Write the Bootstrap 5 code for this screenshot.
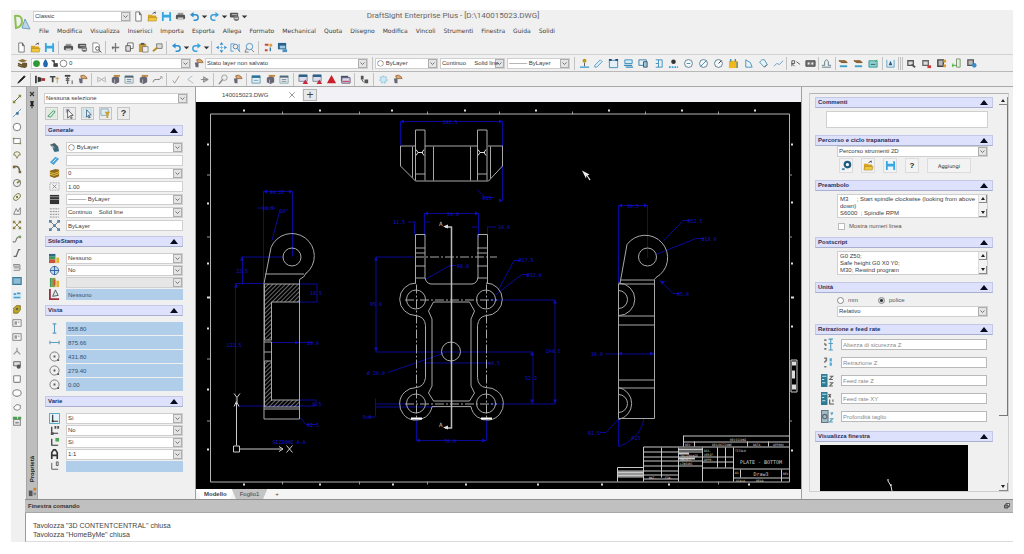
<!DOCTYPE html>
<html lang="it">
<head>
<meta charset="utf-8">
<meta name="viewport" content="width=device-width, initial-scale=1">
<title>DraftSight Enterprise Plus - [D:\140015023.DWG]</title>
<link href="https://cdn.jsdelivr.net/npm/bootstrap@5.3.0/dist/css/bootstrap.min.css" rel="stylesheet">
<style>
:root{--ui:#f0f0f0;--line:#c4c4c4;--ink:#3c3c3c;--head:#dde1fb;--sel:#b0cdea}
body{font-family:"Liberation Sans",Arial,sans-serif;font-size:6px;line-height:8px;color:var(--ink);background:#fff}
.app{height:100vh;min-height:554px;padding:10px 11px 12px}
.shell{background:var(--ui);min-height:0}
.ic{width:11px;height:11px;flex:none;display:block}
.tool{width:14px;height:14px;padding:0;border:0;background:none;display:flex;align-items:center;justify-content:center;flex:none}
.tool.dd{width:6px}
.rule{width:1px;height:13px;background:#c2c2c2;margin:0 2px;flex:none}
.spread .rule{margin:0}
.caption{height:12px}
.apptitle{font-family:Roboto,"Open Sans",sans-serif;font-size:8px;color:#666;left:0;right:140px;top:2px}
.menus{height:18px;gap:8px;padding-left:2px;font-family:"DejaVu Sans",Verdana,sans-serif}
.menus a{color:var(--ink);text-decoration:none}
.bar1{height:14px;padding-left:3px}
.bar2{height:17px;padding-left:4px;border-top:1px solid #d2d2d2}
.bar3{height:16px;padding-left:3px;border-top:1px solid #b9b9b9;border-bottom:1px solid #a9a9a9}
select.pick,input.pick,textarea.pick{font:inherit;color:var(--ink);border:1px solid #cfcfcf;border-radius:0;background:#fff;padding:0 1px;height:11px;line-height:9px;min-width:0;display:block}
select.pick{appearance:none;background:#fff url("data:image/svg+xml,%3Csvg xmlns='http://www.w3.org/2000/svg' viewBox='0 0 9 9'%3E%3Crect x='.5' y='.5' width='8' height='8' fill='%23e4e4e4' stroke='%23adadad'/%3E%3Cpath d='M2.5 3.5l2 2 2-2' fill='none' stroke='%23777'/%3E%3C/svg%3E") no-repeat right center/9px 9px}
select.pick:disabled{background-color:#e6e6e6;opacity:1}
select.naked{border:0;height:9px}
.pick.sel{background:var(--sel);border-color:var(--sel);color:#35506e}
.layerpick{background:#fff;border:1px solid #cfcfcf;height:11px}
.layerpick .ic{width:9px;height:9px}
.rail{width:15px;padding-top:5px}
.rail .tool{width:12px}
.rail .ic{width:10px;height:10px}
.strip{width:12px;background:#bdbdbd;border-left:1px solid #a5a5a5;border-right:1px solid #a5a5a5;padding:2px 0}
.sidelabel{writing-mode:vertical-rl;transform:rotate(180deg);font-weight:700;line-height:10px;color:#222}
.props{width:157px;padding:6px 7px 0 6px}
.sechead{background:var(--head);border:1px solid #c3c8e6;border-bottom-color:#a9afd0;height:11px;line-height:9px;padding:0 4px 0 2px;font-size:6px;font-weight:700;color:#28305c;display:flex;justify-content:space-between;align-items:center;width:100%;text-align:left;margin:0}
.sechead::after{content:"";border:4px solid transparent;border-top:0;border-bottom:5px solid #0a0a1e}
.psec{margin:5px 5px 0 1px}
.prow{display:flex;align-items:center;height:11px;padding-left:4px;margin:0}
.prow .ic{margin-right:6px}
.prow .pick{flex:1}
.rows{padding-top:6px;display:grid;gap:1px}
.rows.loose{gap:2px}
.rows.tall .prow,.rows.tall .pick{height:13px}
.keys{gap:5px;margin-top:3px;padding-left:1px}
.key{width:13px;height:13px;border:1px solid #c4c4c4;background:#ececec;padding:0;display:flex;align-items:center;justify-content:center;font-weight:700;font-size:9px;color:#333;line-height:9px}
.docarea{min-width:0;border-left:1px solid #a0a0a0;border-right:1px solid #a0a0a0;min-height:0}
.tabs{height:15px;background:#f2f2f6}
.doctab{width:106px;background:#fff;border:0;font-size:6px;color:#444;padding:0 6px 0 26px}
.plus{width:14px;height:12px;border:1px solid #b5b5b5;background:#e8e8e8;padding:0;font-size:12px;line-height:8px;color:#444}
.board{background:#000;min-height:0}
.sheets{height:10px;background:#f4f4f4;font-size:6px}
.sheets button{border:0;padding:0 8px;line-height:9px;color:#444;background:#fff;clip-path:polygon(0 0,100% 0,88% 100%,12% 100%)}
.sheets button+button{background:#c4c4c4;margin-left:-3px}
.cam{width:211px;padding:6px 4px 7px 7px}
.cambox{border:1px solid #cfcfcf;border-top-color:#b4b4b4;padding:3px 0 0 5px;min-height:0;overflow:hidden}
.camcol{min-width:0;min-height:0}
.csec{margin-bottom:7px}
.cbody{margin:0 5px 0 22px}
.big{width:14px;height:15px;border:1px solid #dcdcdc;background:#f3f3f3;padding:0;display:flex;align-items:center;justify-content:center;color:#222}
.wide{width:44px;font-family:"DejaVu Sans",sans-serif;font-size:5px}
.note{background:#fff;border:1px solid #cfcfcf;height:24px}
.note textarea{border:0;height:22px;line-height:7px;flex:1;resize:none;overflow:hidden;padding:1px 2px}
.mini{width:9px;background:#f2f2f2;border-left:1px solid #ddd}
.arr{height:8px;border-right:1px solid #888;border-bottom:1px solid #888;display:flex;align-items:center;justify-content:center}
.arr::after{content:"";border:2px solid transparent;border-top:0;border-bottom:3px solid #222}
.arr.down::after{border-bottom:0;border-top:3px solid #222}
.opt{height:8px;gap:4px;color:#555;display:flex;align-items:center}
.opt input{appearance:none;width:7px;height:7px;margin:0;background:#fff;border:1px solid #bbb}
.opt input[type=radio]{border-color:#888;border-radius:50%}
.opt input[type=radio]:checked{background:radial-gradient(#333 0 1px,#cfdbe4 2px)}
.feeds{padding:4px 0 2px;display:grid;gap:7px}
.feeds label{height:11px;display:flex;align-items:center;margin:0 6px 0 6px}
.feeds .ic{width:13px;height:13px;margin-right:7px}
.feeds .pick{flex:1;border-color:#b9b9b9}
.feeds .pick::placeholder{color:#8a8a8a;opacity:1}
.view{background:#000;margin:3px 25px 0 5px;min-height:0}
.scroller{width:15px;padding-left:6px}
.thumb{flex:0 1 79%;border-right:1px solid #777;border-bottom:1px solid #777}
.cmdhead{height:14px;background:#c0c0c0;border-top:1px solid #8f8f8f;border-bottom:1px solid #a8a8a8;margin-left:14px;padding:0 3px;font-weight:700;line-height:12px;color:#333;font-size:6px}
.cmdbody{background:#fff;border-left:1px solid #999;border-bottom:1px solid #dcdcdc;margin-left:14px;height:29px;padding:8px 7px 0;font-size:7px;line-height:9px;color:#444}
</style>
</head>
<body>
<svg width="0" height="0" class="position-absolute" aria-hidden="true">
<defs>
<symbol id="new" viewBox="0 0 12 12"><path d="M3 1h4l2 3v7H3z" fill="#fff" stroke="#777"/><path d="M7 1v3h2" fill="none" stroke="#555"/></symbol>
<symbol id="open" viewBox="0 0 12 12"><path d="M1 4h4l1 1h4v6H1z" fill="#d9a520"/><path d="M2 7h9l-1 4H1z" fill="#f0c83c" stroke="#9a7a20" stroke-width=".5"/><path d="M6 3l3-2v2" fill="none" stroke="#444"/></symbol>
<symbol id="save" viewBox="0 0 12 12"><path d="M1 1h9l1 1v9H1z" fill="#3aa6e0"/><path d="M3 1h6v3H3zM3 7h6v4H3z" fill="#e8f6ff"/></symbol>
<symbol id="print" viewBox="0 0 12 12"><path d="M3 2h6v3H3z" fill="#999"/><rect x="1" y="4" width="10" height="5" rx="1.5" fill="#555"/><path d="M3 7h6v3H3z" fill="#ccc"/></symbol>
<symbol id="print2" viewBox="0 0 12 12"><rect x="1" y="2" width="9" height="5" rx="1" fill="#555"/><path d="M3 4h6" stroke="#ccc"/><circle cx="8" cy="8" r="3" fill="#777"/><path d="M6 8h4" stroke="#eee"/></symbol>
<symbol id="preview" viewBox="0 0 12 12"><path d="M2 1h5l2 2v8H2z" fill="#fff" stroke="#888"/><circle cx="7" cy="7" r="2" fill="none" stroke="#555"/><path d="M8.500 8.500l3 3" stroke="#555"/></symbol>
<symbol id="undo" viewBox="0 0 12 12"><path d="M3 4h4a3 3 0 0 1 0 6H5" fill="none" stroke="#2c8fd0" stroke-width="1.600"/><path d="M1 4l4-3v6z" fill="#2c8fd0"/></symbol>
<symbol id="redo" viewBox="0 0 12 12"><path d="M9 4H5a3 3 0 0 0 0 6h2" fill="none" stroke="#3aa2dc" stroke-width="1.600"/><path d="M11 4L7 1v6z" fill="#3aa2dc"/></symbol>
<symbol id="dd" viewBox="0 0 12 12"><path d="M3 5h6l-3 3z" fill="#333"/></symbol>
<symbol id="cut" viewBox="0 0 12 12"><path d="M6 1v10M2 6h8" stroke="#777" stroke-width="1.400"/><path d="M3 5v3" stroke="#555"/></symbol>
<symbol id="copy" viewBox="0 0 12 12"><path d="M4 1h6v6H4z" fill="#fff" stroke="#666"/><path d="M2 4h5v6H2z" fill="#ddd" stroke="#555"/></symbol>
<symbol id="paste" viewBox="0 0 12 12"><path d="M1 2h8v9H1z" fill="#c99a2e"/><path d="M3 1h4v2H3z" fill="#555"/><path d="M5 5h6v6H5z" fill="#eee" stroke="#666" stroke-width=".7"/></symbol>
<symbol id="brush" viewBox="0 0 12 12"><path d="M5 2h6v5H5z" fill="#ddd" stroke="#777"/><path d="M1 10l5-4" stroke="#b88b20" stroke-width="2"/></symbol>
<symbol id="pan" viewBox="0 0 12 12"><path d="M6 0l2 3H4zM6 12l2-3H4zM0 6l3-2v4zM12 6L9 4v4z" fill="#2f8fd0"/><path d="M6 4v4M4 6h4" stroke="#7bb8e4"/></symbol>
<symbol id="zwin" viewBox="0 0 12 12"><path d="M1 2h4M1 2v8h3M10 2v8" fill="none" stroke="#5b9fd2"/><circle cx="6" cy="5" r="2.500" fill="none" stroke="#4a86b4"/><path d="M8 7l3 4" stroke="#4a86b4"/></symbol>
<symbol id="zoom" viewBox="0 0 12 12"><circle cx="6" cy="5" r="3.500" fill="none" stroke="#4f94c6"/><path d="M3 7l-2 4h4M8 8l3 3" fill="none" stroke="#777"/></symbol>
<symbol id="sheet" viewBox="0 0 12 12"><path d="M2 2h8v8H2z" fill="#eee"/><path d="M2 3h4M2 9h3" stroke="#c94a30" stroke-width="2"/><path d="M7 2h3v3H7z" fill="#e0a030"/><path d="M8 6v4" stroke="#3c78a0" stroke-width="1.500"/></symbol>
<symbol id="panel" viewBox="0 0 12 12"><path d="M1 1h9v7H1z" fill="#28638e"/><path d="M3 4h6v3H3z" fill="#9cc8e4"/><path d="M6 8h5v3H6z" fill="#4a90c0"/></symbol>
<symbol id="layer" viewBox="0 0 12 12"><path d="M1 3l5-2 5 2-5 2z" fill="#8d7434"/><path d="M1 6l5 2 5-2M1 8l5 2" fill="none" stroke="#5e4c22" stroke-width="1.500"/><circle cx="8" cy="8" r="3" fill="#6a5830"/></symbol>
<symbol id="green" viewBox="0 0 12 12"><circle cx="6" cy="6" r="4.500" fill="#2f9a35"/></symbol>
<symbol id="drop" viewBox="0 0 12 12"><path d="M6 0q4 5 3 8a3 3 0 0 1-6 0q-1-3 3-8" fill="#2468b0"/></symbol>
<symbol id="lock" viewBox="0 0 12 12"><path d="M2 2h4v4M5 6h5v4H5z" fill="#444" stroke="#444"/></symbol>
<symbol id="ring" viewBox="0 0 12 12"><circle cx="6" cy="6" r="4.500" fill="#fff" stroke="#666"/></symbol>
<symbol id="pencil" viewBox="0 0 12 12"><path d="M2 10l2-3 5-5 1 1-5 5z" fill="#222" stroke="#222"/></symbol>
<symbol id="bolt" viewBox="0 0 12 12"><path d="M1 2v8" stroke="#444" stroke-width="2"/><path d="M3 3l4 1v4l-4 1z" fill="#333"/><path d="M7 6h4" stroke="#a33" stroke-width="3"/></symbol>
<symbol id="tee" viewBox="0 0 12 12"><path d="M1 3h6M4 3v6" stroke="#444" stroke-width="1.800"/><path d="M9 3v7M7 5h4" stroke="#c69a50"/></symbol>
<symbol id="screw" viewBox="0 0 12 12"><path d="M2 1h6v2H2z" fill="#444"/><path d="M5 3v8M3 5h4M3 7h4" stroke="#666" stroke-width="1.400"/><path d="M10 7v4" stroke="#555"/></symbol>
<symbol id="hand" viewBox="0 0 12 12"><path d="M4 2q3-2 6 1l1 2H5z" fill="#d9a878" stroke="#a0703c"/><path d="M2 5h4v5H3z" fill="#667"/></symbol>
<symbol id="dim" viewBox="0 0 12 12"><path d="M2 3v6M10 3v6M3 4l6 4M3 8l6-4" stroke="#aaa"/></symbol>
<symbol id="box" viewBox="0 0 12 12"><path d="M2 4l5-2 3 2v5l-4 2-4-2z" fill="#667"/><path d="M4 2h7" stroke="#c08a3c" stroke-width="2"/><path d="M5 6v4" stroke="#bbb"/></symbol>
<symbol id="table" viewBox="0 0 12 12"><path d="M1 2h9v8H1z" fill="#e9eef2" stroke="#8aa"/><path d="M1 3h9" stroke="#567" stroke-width="2"/><path d="M3 6h5M3 8h5" stroke="#789"/></symbol>
<symbol id="curve" viewBox="0 0 12 12"><path d="M1 9q1-4 4-3t5-2" fill="none" stroke="#777"/><path d="M9 3h2v2" fill="none" stroke="#999"/></symbol>
<symbol id="tick" viewBox="0 0 12 12"><path d="M2 7l2 3 5-8" fill="none" stroke="#999"/></symbol>
<symbol id="angle" viewBox="0 0 12 12"><path d="M8 2L3 6l6 4" fill="none" stroke="#a5b8c2"/></symbol>
<symbol id="flag" viewBox="0 0 12 12"><path d="M2 6h8M5 3v6l5-3z" fill="#bbb" stroke="#888"/></symbol>
<symbol id="mag" viewBox="0 0 12 12"><circle cx="7" cy="4" r="3" fill="#eee" stroke="#999"/><path d="M5 6l-4 5" stroke="#888" stroke-width="1.500"/></symbol>
<symbol id="win" viewBox="0 0 12 12"><path d="M1 2h9v8H1z" fill="#dfeef6" stroke="#6d9cb4"/><path d="M1 3h9" stroke="#2a6f94" stroke-width="2.500"/><path d="M3 7h5" stroke="#7ab"/></symbol>
<symbol id="winred" viewBox="0 0 12 12"><path d="M1 1h9v7H1z" fill="#dde" stroke="#789"/><path d="M1 2h9" stroke="#2c6288" stroke-width="2.500"/><path d="M8 6l3 5H5z" fill="#c8283c"/></symbol>
<symbol id="tri" viewBox="0 0 12 12"><path d="M6 1l5 9H1z" fill="#c8202c"/></symbol>
<symbol id="wins" viewBox="0 0 12 12"><path d="M1 2h8v6H1z" fill="#456"/><path d="M2 4h9v6H2z" fill="#d8d4ea" stroke="#63587c"/><path d="M3 8h7" stroke="#c8283c"/></symbol>
<symbol id="ab" viewBox="0 0 12 12"><path d="M2 2h3v4H2zM6 6h4v4H6z" fill="#555"/><path d="M3 6l2 3" stroke="#444"/></symbol>
<symbol id="snow" viewBox="0 0 12 12"><circle cx="6" cy="6" r="3.500" fill="#cfe8f4" stroke="#9ccbe2" stroke-width="2" stroke-dasharray="2 1"/></symbol>
<symbol id="snap" viewBox="0 0 12 12"><path d="M1 10h10" stroke="#3f9fd0" stroke-width="1.500"/><path d="M6 9V5" stroke="#555"/><circle cx="6" cy="3" r="2.200" fill="#b59a20"/></symbol>
<symbol id="clip" viewBox="0 0 12 12"><path d="M2 8l6-6 2 2-6 6H2z" fill="#e5f3fa" stroke="#4c94c0"/></symbol>
<symbol id="frame" viewBox="0 0 12 12"><path d="M1.500 2.500h9v8h-9z" fill="#e3f2f9" stroke="#3c8cbc"/><path d="M1 2h3M8 2h3" stroke="#246" stroke-width="2"/></symbol>
<symbol id="stack" viewBox="0 0 12 12"><path d="M2 2h8v4H2z" fill="#d4ecf6" stroke="#3c8cbc"/><path d="M1 8h9M3 10h8" stroke="#3c8cbc" stroke-width="1.500"/></symbol>
<symbol id="frame2" viewBox="0 0 12 12"><path d="M1 2h8v6H1z" fill="#e3f2f9" stroke="#3c7ca4"/><path d="M6 4h4v6H6z" fill="#9cc4d8" stroke="#456"/></symbol>
<symbol id="ladder" viewBox="0 0 12 12"><path d="M3 2h7v8H3M6 2v8M3 6h3" fill="none" stroke="#3c8cbc"/></symbol>
<symbol id="target" viewBox="0 0 12 12"><path d="M1 10h10" stroke="#3f9fd0" stroke-width="2" stroke-dasharray="2 1"/><circle cx="6" cy="4" r="2.500" fill="#333"/></symbol>
<symbol id="cdash" viewBox="0 0 12 12"><circle cx="6" cy="6" r="4.300" fill="#f6fafc" stroke="#5b7c8c"/><path d="M4 6h4" stroke="#3b88b4"/></symbol>
<symbol id="cslash" viewBox="0 0 12 12"><circle cx="6" cy="6" r="4.300" fill="#f6fafc" stroke="#5b7c8c"/><path d="M3 9l6-6" stroke="#3b88b4"/></symbol>
<symbol id="crad" viewBox="0 0 12 12"><circle cx="6" cy="6" r="4.300" fill="#f6fafc" stroke="#5b7c8c"/><path d="M6 6l3-3" stroke="#333"/></symbol>
<symbol id="gold" viewBox="0 0 12 12"><path d="M1 3h9v8H1z" fill="#f0b81c"/><path d="M3 1v3M8 1v3M10 4v7" stroke="#4a8cb0" stroke-width="1.500"/></symbol>
<symbol id="shape" viewBox="0 0 12 12"><path d="M3 2v8h7L8 5z" fill="#e8f4fa" stroke="#4c8fb4"/></symbol>
<symbol id="arcs" viewBox="0 0 12 12"><path d="M2 5q1-4 5-3l3 5-3 3z" fill="#e8f4fa" stroke="#4c8fb4"/><path d="M7 10l3-3" stroke="#555"/></symbol>
<symbol id="jog" viewBox="0 0 12 12"><path d="M1 9l3-3 3 1 4-4" fill="none" stroke="#5b9fc2"/></symbol>
<symbol id="rtext" viewBox="0 0 12 12"><path d="M2 9V3h3v3H2l3 3" fill="none" stroke="#555"/><path d="M7 4l4 3" stroke="#555"/></symbol>
<symbol id="grid2" viewBox="0 0 12 12"><path d="M1 3h10v6H1z" fill="#777" stroke="#444"/><path d="M3 5h2v2H3zM7 5h2v2H7z" fill="#eee"/></symbol>
<symbol id="scale" viewBox="0 0 12 12"><path d="M1 8h3V4q2-4 4 0v4h3M1 10h10" fill="none" stroke="#5c7888"/></symbol>
<symbol id="handdim" viewBox="0 0 12 12"><path d="M1 3h7l2 2H4z" fill="#9c6c38" stroke="#7a5024"/><path d="M2 9h8" stroke="#38a0c8" stroke-width="2"/></symbol>
<symbol id="teal" viewBox="0 0 12 12"><path d="M1 3h9v7H1z" fill="#8fd0cc" stroke="#3b9aa0"/><path d="M3 7h5" stroke="#366"/><path d="M8 4l2-2" stroke="#2a2"/></symbol>
<symbol id="axis" viewBox="0 0 12 12"><path d="M2 2v8h8V2" fill="#e3f0f6" stroke="#5aa0c0"/><path d="M6 3l2 5H4z" fill="#357"/></symbol>
<symbol id="blk" viewBox="0 0 12 12"><path d="M2 3h6v5H2z" fill="#ddd" stroke="#555" stroke-width="1.400"/><path d="M6 7l4 3" stroke="#555" stroke-width="2"/></symbol>
<symbol id="blkred" viewBox="0 0 12 12"><path d="M2 3h6v5H2z" fill="#ddd" stroke="#666" stroke-width="1.400"/><path d="M7 8h4v3H7z" fill="#d23838"/></symbol>
<symbol id="blkor" viewBox="0 0 12 12"><path d="M2 2h6v7H2z" fill="#bbb" stroke="#444" stroke-width="1.500"/><path d="M8 2h3v3H8zM8 7h3v3H8z" fill="#e39a28"/></symbol>
<symbol id="blkgr" viewBox="0 0 12 12"><path d="M6 1h4v9H6z" fill="#e4eee0" stroke="#7a9468"/><path d="M1 8h5M2 6v4" stroke="#3a3"/></symbol>
<symbol id="blkbl" viewBox="0 0 12 12"><path d="M2 2h6v6H2z" fill="#bbb" stroke="#555" stroke-width="1.400"/><circle cx="9" cy="8" r="2.500" fill="#3b8ec8"/></symbol>
<symbol id="line" viewBox="0 0 12 12"><path d="M3 9l6-6" stroke="#6b6b50" stroke-width="1.200"/><path d="M1 8h3v3H1zM8 1h3v3H8z" fill="#8b8a40"/></symbol>
<symbol id="xline" viewBox="0 0 12 12"><path d="M1 11L11 1" stroke="#4b93c4"/><path d="M5 5h3v3H5z" fill="#3b6f94"/></symbol>
<symbol id="rect" viewBox="0 0 12 12"><path d="M2 3h8v6H2z" fill="#fff" stroke="#777"/><path d="M1 2h2v2H1zM9 8h2v2H9z" fill="#8b8a40"/></symbol>
<symbol id="poly" viewBox="0 0 12 12"><path d="M2 6q0-4 4-4t4 4H8l-2 4-2-4z" fill="#eed" stroke="#77744c"/></symbol>
<symbol id="arc" viewBox="0 0 12 12"><path d="M2 3h4q3 1 3 6" fill="none" stroke="#6b6544" stroke-width="1.800"/><path d="M1 2h3v3H1zM8 8h3v3H8z" fill="#77683c"/></symbol>
<symbol id="circ" viewBox="0 0 12 12"><circle cx="6" cy="6" r="4.300" fill="#eee" stroke="#666"/><path d="M6 6l4-3" stroke="#8b8a40" stroke-width="2"/></symbol>
<symbol id="ell" viewBox="0 0 12 12"><ellipse cx="6" cy="6" rx="5" ry="3" transform="rotate(-45 6 6)" fill="#eec" stroke="#77744c"/><circle cx="6" cy="6" r="1.200" fill="#554"/></symbol>
<symbol id="spl" viewBox="0 0 12 12"><path d="M2 10L5 3l2 4 3-5v8z" fill="none" stroke="#777"/></symbol>
<symbol id="pts" viewBox="0 0 12 12"><path d="M2 2l8 8M10 2l-8 8" stroke="#8f8848"/><path d="M1 1h3v3H1zM8 1h3v3H8zM1 8h3v3H1zM8 8h3v3H8zM5 5h2v2H5z" fill="#8f8848"/></symbol>
<symbol id="wave" viewBox="0 0 12 12"><path d="M1 9q3 2 4-2t5-4" fill="none" stroke="#777" stroke-width="1.300"/><path d="M8 2h3v3H8z" fill="#7aa060"/></symbol>
<symbol id="slash" viewBox="0 0 12 12"><path d="M2 10h3l3-8h2" fill="none" stroke="#666" stroke-width="1.500"/></symbol>
<symbol id="cloud" viewBox="0 0 12 12"><path d="M2 3h7l1 2H2zM2 7h8l-1 3H2" fill="#eee" stroke="#777"/></symbol>
<symbol id="hatch" viewBox="0 0 12 12"><path d="M1 2h10v8H1z" fill="#8dbcd4" stroke="#3b7c9c" stroke-width="1.400"/></symbol>
<symbol id="hatch2" viewBox="0 0 12 12"><path d="M1 3h10v8H1z" fill="#cfe8f4"/><path d="M2 5h3M6 4h4M2 9h8" stroke="#48a0cc" stroke-width="2"/></symbol>
<symbol id="gem" viewBox="0 0 12 12"><path d="M2 5l3-3h5v5l-3 4H2z" fill="#c0a828" stroke="#7d7024"/><circle cx="6" cy="6" r="1.500" fill="#665"/></symbol>
<symbol id="note" viewBox="0 0 12 12"><path d="M1 2h10v8H1z" fill="#f4f4f4" stroke="#777"/><path d="M3 4h3v4H3z" fill="#999"/><path d="M7 5h2" stroke="#777"/></symbol>
<symbol id="tree" viewBox="0 0 12 12"><path d="M6 2v4L2 10M6 6l4 4" fill="none" stroke="#999" stroke-width="1.500"/></symbol>
<symbol id="bub" viewBox="0 0 12 12"><path d="M2 2h8v5H2z" fill="#ddd" stroke="#555"/><circle cx="8" cy="8" r="2.500" fill="#555"/></symbol>
<symbol id="sq" viewBox="0 0 12 12"><rect x="2" y="2" width="8" height="8" rx="1" fill="#fafafa" stroke="#888" stroke-width="1.300"/></symbol>
<symbol id="oval" viewBox="0 0 12 12"><ellipse cx="6" cy="6" rx="5" ry="4" fill="#fafafa" stroke="#888" stroke-width="1.300"/></symbol>
<symbol id="rot" viewBox="0 0 12 12"><path d="M2 6l4-3 4 1v4l-3 2-4-1z" fill="#fafafa" stroke="#888" stroke-width="1.200"/></symbol>
<symbol id="grp" viewBox="0 0 12 12"><path d="M2 4h8v7H2z" fill="#eee" stroke="#888" stroke-width="1.300"/><path d="M1 1h5v3H1zM7 1h4v3H7z" fill="#4aa050"/><path d="M4 7h4v2H4z" fill="#888"/></symbol>
<symbol id="close" viewBox="0 0 12 12"><path d="M2 2l8 8M10 2l-8 8" stroke="#333" stroke-width="2.200"/></symbol>
<symbol id="x" viewBox="0 0 12 12"><path d="M2 2l8 8M10 2l-8 8" stroke="#666"/></symbol>
<symbol id="pin" viewBox="0 0 12 12"><path d="M3 1h6M3 7h6M6 1v10" stroke="#222" stroke-width="1.500"/><path d="M4 1h4v6H4z" fill="#222"/></symbol>
<symbol id="doti" viewBox="0 0 12 12"><path d="M2 5h4v6H2z" fill="#555"/><path d="M7 2h3v3H7z" fill="#d0802c"/><path d="M7 7h3v3H7z" fill="#888"/></symbol>
<symbol id="selnew" viewBox="0 0 12 12"><path d="M1 1h10v10H1z" fill="#dcebd8"/><path d="M2 9l6-6 2 1-5 6z" fill="#d7ead2" stroke="#4c9480"/></symbol>
<symbol id="cursor" viewBox="0 0 12 12"><path d="M2 1h4v4H2z" fill="#aab"/><path d="M4 2l6 6-3 .3 2 2.700-1.500.5L6 9l-2 2z" fill="#fff" stroke="#333" stroke-width=".8"/></symbol>
<symbol id="cursorb" viewBox="0 0 12 12"><path d="M1 1h9v9H1z" fill="#d6ecf8" stroke="#9cc" stroke-dasharray="1 1"/><path d="M5 2l5 5.500-3 .3 2 2.500-1.500.6L6.500 8.500 5 10z" fill="#eef6fb" stroke="#246" stroke-width=".8"/></symbol>
<symbol id="filter" viewBox="0 0 12 12"><path d="M1 1h8v7H1z" fill="#e0ebf0" stroke="#8ab"/><path d="M5 4h6l-2 3v4H7V7z" fill="#caa228"/></symbol>
<symbol id="color" viewBox="0 0 12 12"><path d="M1 3l5-2 4 4-4 3z" fill="#48626c"/><path d="M4 7l6-2 1 5-5 1z" fill="#3c6a80"/><path d="M3 4l3 2" stroke="#ccc"/></symbol>
<symbol id="link" viewBox="0 0 12 12"><path d="M1 8l6-6 4 2-6 7z" fill="#4aa3d8"/><path d="M4 8l4-4" stroke="#dff"/></symbol>
<symbol id="layers" viewBox="0 0 12 12"><path d="M1 3l6-2 4 1v7l-5 2-5-2z" fill="#8d6a1c"/><path d="M1 5l5 1 5-2M1 7l5 1 5-2" fill="none" stroke="#f0cb4c"/></symbol>
<symbol id="ltscale" viewBox="0 0 12 12"><path d="M1 2h10v8H1z" fill="none" stroke="#aaa" stroke-dasharray="2 1"/><path d="M4 4l4 4M8 4L4 8" stroke="#888"/></symbol>
<symbol id="weight" viewBox="0 0 12 12"><path d="M1 1h10v10H1z" fill="#333"/><path d="M1 3h10M1 6h10" stroke="#999"/></symbol>
<symbol id="ltype" viewBox="0 0 12 12"><path d="M1 2h10M1 5h10M1 8h10M1 11h10" stroke="#888" stroke-dasharray="2 1"/></symbol>
<symbol id="net" viewBox="0 0 12 12"><path d="M2 2l8 8M10 2l-8 8" stroke="#678"/><path d="M0 0h3v3H0zM9 0h3v3H9zM0 9h3v3H0zM9 9h3v3H9zM4.500 4.500h3v3h-3z" fill="#5b84a4"/></symbol>
<symbol id="pstyle" viewBox="0 0 12 12"><path d="M0 1h7v3H0z" fill="#2d6a88"/><path d="M0 4h7v3H0z" fill="#3e9a54"/><path d="M0 7h7v4H0z" fill="#c8543a"/><path d="M8 5h3v6H8z" fill="#e2b232"/></symbol>
<symbol id="globe" viewBox="0 0 12 12"><circle cx="6" cy="6" r="4.500" fill="#b7e0e4" stroke="#476ea4"/><path d="M1 6h10M6 1v10" stroke="#3658a0"/></symbol>
<symbol id="ptable" viewBox="0 0 12 12"><path d="M1 1h2v10H1z" fill="#3e9a54"/><path d="M3 1h4v10H3z" fill="#8d9a50"/><path d="M5 3h2v6H5z" fill="#c8543a"/><path d="M8 4h3v7H8z" fill="#e2b232"/></symbol>
<symbol id="pspace" viewBox="0 0 12 12"><path d="M1 0v11h10" stroke="#a02c3c" stroke-width="2" fill="none"/><path d="M4 8l3-7 3 6z" fill="#dfe8d8" stroke="#456"/></symbol>
<symbol id="vert" viewBox="0 0 12 12"><path d="M6 1v10M4 1h4M4 11h4" stroke="#5e9cc0" stroke-width="1.200"/></symbol>
<symbol id="horz" viewBox="0 0 12 12"><path d="M1 6h10M1 4v4M11 4v4" stroke="#5e9cc0" stroke-width="1.200"/></symbol>
<symbol id="cen" viewBox="0 0 12 12"><circle cx="6" cy="6" r="5" fill="none" stroke="#777"/><path d="M5 5h2v2H5zM9 9h2v2H9z" fill="#555"/></symbol>
<symbol id="ucs1" viewBox="0 0 12 12"><path d="M.5.500h11v11H.5z" fill="#e3f4fa" stroke="#4ba0c4"/><path d="M4 2v7h6" fill="none" stroke="#333" stroke-width="1.300"/><path d="M3 8h2v2H3z" fill="#333"/></symbol>
<symbol id="ucs2" viewBox="0 0 12 12"><path d="M3 2v7h7" fill="none" stroke="#333" stroke-width="1.300"/><path d="M6 1h2v3H6zM9 1h2v3H9zM2 8h3v3H2z" fill="#555"/></symbol>
<symbol id="ucs3" viewBox="0 0 12 12"><path d="M3 2v7h7" fill="none" stroke="#333" stroke-width="1.300"/><path d="M7 1h4v4H7z" fill="#4aa858"/></symbol>
<symbol id="annot" viewBox="0 0 12 12"><path d="M3 11V4l2-3h2l2 3v7M3 7h6" fill="none" stroke="#333" stroke-width="1.800"/></symbol>
<symbol id="ucs4" viewBox="0 0 12 12"><path d="M3 2v7h7" fill="none" stroke="#555"/><path d="M8 1h2v4H8z" fill="none" stroke="#555"/></symbol>
<symbol id="gear" viewBox="0 0 12 12"><circle cx="7" cy="5" r="3" fill="#fff" stroke="#1e5c84" stroke-width="2.400"/><path d="M1 9h3v2H1z" fill="#48a"/></symbol>
<symbol id="sa" viewBox="0 0 12 12"><path d="M3 2h2M3 5l2 2M3 10h2" stroke="#777" stroke-width="1.500"/><path d="M9 1v10M7 1h4M7 11h4M7 5h4" stroke="#4f9cc4"/></symbol>
<symbol id="rz" viewBox="0 0 12 12"><path d="M3 2h2v2L3 6M3 10h2" fill="none" stroke="#777" stroke-width="1.400"/><path d="M9 2v8" stroke="#4fa8d4" stroke-width="2" stroke-dasharray="3 1"/></symbol>
<symbol id="fz" viewBox="0 0 12 12"><path d="M0 0h6v12H0z" fill="#2b7c94"/><path d="M1 2h4M1 5h2M1 8h3" stroke="#bfe4ea"/><path d="M8 2h3L8 5h3M8 8h3l-3 3h3" fill="none" stroke="#666"/></symbol>
<symbol id="fxy" viewBox="0 0 12 12"><path d="M0 0h6v12H0z" fill="#2b7c94"/><path d="M1 2h4M1 5h2M1 8h3" stroke="#bfe4ea"/><path d="M7 2l2 3M9 2L7 5M8 7v4h4M11 7v2" fill="none" stroke="#555"/></symbol>
<symbol id="pt" viewBox="0 0 12 12"><path d="M.5.500h6v11h-6z" fill="#a8bcc6" stroke="#607885"/><circle cx="3.500" cy="6" r="2" fill="none" stroke="#567"/><path d="M9 2l1 2 1-2M8 8h3l-3 3h3" fill="none" stroke="#4f9cc4"/></symbol>
<symbol id="restore" viewBox="0 0 12 12"><path d="M4 1h7v6H4z" fill="#ddd" stroke="#333" stroke-width="1.500"/><path d="M1 4h7v6H1z" fill="#888" stroke="#333" stroke-width="1.500"/></symbol>
<pattern id="hp" width="3" height="3" patternUnits="userSpaceOnUse" patternTransform="rotate(45)"><path d="M0 0v3" stroke="#999" stroke-width="1.400"/></pattern>
</defs>
</svg>

<div class="app d-flex flex-column">
<div class="shell d-flex flex-column flex-fill">
  <header>
    <div class="d-flex">
      <svg width="18" height="18" viewBox="0 0 16 18" class="flex-shrink-0 mt-1" style="margin:0 2px" aria-label="DraftSight"><path d="M1 2q7-1 7 5t-6 7z" fill="none" stroke="#8cc152" stroke-width="2"/><path d="M8 14l3-9 5 10z" fill="#bcd6e6" stroke="#6fa0bd"/></svg>
      <div class="flex-fill">
        <div class="caption d-flex align-items-center position-relative">
          <select class="pick" style="width:98px" aria-label="Area di lavoro"><option>Classic</option></select>
          <div class="d-flex" data-tools="new open save print undo dd redo dd print2 dd"></div>
          <div class="apptitle position-absolute text-center pe-none">DraftSight Enterprise Plus - [D:\140015023.DWG]</div>
        </div>
        <nav class="menus d-flex align-items-center" aria-label="Menu">
          <a href="#" class="ms-1">File</a><a href="#">Modifica</a><a href="#">Visualizza</a><a href="#">Inserisci</a><a href="#">Importa</a><a href="#">Esporta</a><a href="#">Allega</a><a href="#">Formato</a><a href="#">Mechanical</a><a href="#">Quota</a><a href="#">Disegno</a><a href="#">Modifica</a><a href="#">Vincoli</a><a href="#">Strumenti</a><a href="#">Finestra</a><a href="#">Guida</a><a href="#">Solidi</a>
        </nav>
      </div>
    </div>
    <div class="bar1 d-flex align-items-center" data-tools="new open save | print print2 preview | cut copy paste brush | undo dd redo dd | pan zwin zoom | sheet panel"></div>
    <div class="bar2 d-flex align-items-center">
      <div class="d-flex" data-tools="layer"></div>
      <div class="layerpick d-flex align-items-center" style="width:160px;margin-left:2px"><svg class="ic"><use href="#green"/></svg><svg class="ic"><use href="#drop"/></svg><svg class="ic"><use href="#lock"/></svg><svg class="ic"><use href="#ring"/></svg><select class="pick naked flex-fill" aria-label="Layer"><option>0</option></select></div>
      <div class="d-flex" data-tools="hand"></div>
      <select class="pick" style="width:163px" aria-label="Stato layer"><option>Stato layer non salvato</option></select>
      <span class="rule ms-1"></span>
      <select class="pick" style="width:63px" aria-label="Colore"><option>◯ ByLayer</option></select>
      <select class="pick" style="width:65px;margin:0 2px" aria-label="Stile linea"><option>Continuo&nbsp;&nbsp;&nbsp;&nbsp; Solid line</option></select>
      <select class="pick" style="width:63px" aria-label="Spessore linea"><option>——— ByLayer</option></select>
      <span class="rule ms-1"></span>
      <div class="spread d-flex flex-fill justify-content-between align-items-center" style="margin-right:35px" data-tools="snap clip frame stack frame2 ladder target cdash cslash crad gold shape arcs jog | rtext grid2 | scale | handdim handdim teal | axis | | | blk blkred blkor blkgr blkbl"></div>
    </div>
    <div class="bar3 d-flex align-items-center" data-tools="pencil | bolt tee screw hand | dim box table box curve | tick angle flag | mag hand | win box table | winred winred tri wins | ab | snow hand"></div>
  </header>

  <main class="d-flex flex-fill" style="min-height:0">
    <div class="rail d-flex flex-column flex-shrink-0" data-tools="line xline ring rect poly arc circ ell spl pts wave slash cloud hatch hatch2 gem note note tree bub sq oval rot grp"></div>
    <div class="strip d-flex flex-column align-items-center flex-shrink-0">
      <button class="tool" style="width:9px;height:9px" aria-label="Chiudi"><svg class="ic" style="width:6px;height:6px"><use href="#close"/></svg></button>
      <button class="tool" aria-label="Blocca"><svg class="ic" style="width:8px;height:8px"><use href="#pin"/></svg></button>
      <span class="sidelabel mt-auto">Proprietà</span>
      <svg class="ic mt-1"><use href="#doti"/></svg>
    </div>
    <aside class="props flex-shrink-0" aria-label="Proprietà">
      <select class="pick w-100" aria-label="Selezione"><option>Nessuna selezione</option></select>
      <div class="keys d-flex">
        <button class="key" aria-label="Selezione"><svg class="ic"><use href="#selnew"/></svg></button><button class="key" aria-label="Seleziona entità"><svg class="ic"><use href="#cursor"/></svg></button><button class="key" aria-label="Selezione finestra"><svg class="ic"><use href="#cursorb"/></svg></button><button class="key" aria-label="Filtro"><svg class="ic"><use href="#filter"/></svg></button><button class="key">?</button>
      </div>
      <section class="psec"><button class="sechead">Generale</button><div class="rows loose">
        <label class="prow"><svg class="ic"><use href="#color"/></svg><select class="pick"><option>◯ ByLayer</option></select></label>
        <label class="prow"><svg class="ic"><use href="#link"/></svg><input class="pick"></label>
        <label class="prow"><svg class="ic"><use href="#layers"/></svg><select class="pick"><option>0</option></select></label>
        <label class="prow"><svg class="ic"><use href="#ltscale"/></svg><input class="pick" value="1.00"></label>
        <label class="prow"><svg class="ic"><use href="#weight"/></svg><select class="pick"><option>——— ByLayer</option></select></label>
        <label class="prow"><svg class="ic"><use href="#ltype"/></svg><select class="pick"><option>Continuo&nbsp;&nbsp;&nbsp; Solid line</option></select></label>
        <label class="prow"><svg class="ic"><use href="#net"/></svg><input class="pick" value="ByLayer"></label>
      </div></section>
      <section class="psec"><button class="sechead">StileStampa</button><div class="rows">
        <label class="prow"><svg class="ic"><use href="#pstyle"/></svg><select class="pick"><option>Nessuno</option></select></label>
        <label class="prow"><svg class="ic"><use href="#globe"/></svg><select class="pick"><option>No</option></select></label>
        <label class="prow"><svg class="ic"><use href="#ptable"/></svg><select class="pick" disabled><option></option></select></label>
        <label class="prow"><svg class="ic"><use href="#pspace"/></svg><input class="pick sel" value="Nessuno"></label>
      </div></section>
      <section class="psec"><button class="sechead">Vista</button><div class="rows tall">
        <label class="prow"><svg class="ic"><use href="#vert"/></svg><input class="pick sel" value="558.80"></label>
        <label class="prow"><svg class="ic"><use href="#horz"/></svg><input class="pick sel" value="875.66"></label>
        <label class="prow"><svg class="ic"><use href="#cen"/></svg><input class="pick sel" value="431.80"></label>
        <label class="prow"><svg class="ic"><use href="#cen"/></svg><input class="pick sel" value="279.40"></label>
        <label class="prow"><svg class="ic"><use href="#cen"/></svg><input class="pick sel" value="0.00"></label>
      </div></section>
      <section class="psec"><button class="sechead">Varie</button><div class="rows">
        <label class="prow"><svg class="ic"><use href="#ucs1"/></svg><select class="pick"><option>Sì</option></select></label>
        <label class="prow"><svg class="ic"><use href="#ucs2"/></svg><select class="pick"><option>No</option></select></label>
        <label class="prow"><svg class="ic"><use href="#ucs3"/></svg><select class="pick"><option>Sì</option></select></label>
        <label class="prow"><svg class="ic"><use href="#annot"/></svg><select class="pick"><option>1:1</option></select></label>
        <label class="prow"><svg class="ic"><use href="#ucs4"/></svg><input class="pick sel"></label>
      </div></section>
    </aside>

    <section class="docarea d-flex flex-column flex-fill">
      <div class="tabs d-flex align-items-center">
        <button class="doctab d-flex align-items-center justify-content-between h-100"><span>140015023.DWG</span><svg class="ic" style="width:8px;height:8px"><use href="#x"/></svg></button>
        <button class="plus" style="margin-left:1px" aria-label="Nuovo">+</button>
      </div>
      <div class="board flex-fill">
      <svg class="d-block w-100 h-100" viewBox="196 102 605 386" fill="none" stroke="#a8a8a8" stroke-width="1" font-family="'DejaVu Sans Mono',monospace">
        <path d="M210.500 113.500h579v368h-579z" stroke="#b5b5b5"/>
        <g stroke="#ddd" stroke-width="2"><path d="M243 110h2M319 110h2M391 110h2M464 110h2M535 110h2M608 110h2M681 110h2M754 110h2M207 144h2M207 203h2M207 263h2M207 297h3M207 328h2M207 389h2M207 449h2M791 144h2M791 202h2M791 263h2M791 297h3M791 326h2M791 450h2M243 484h2M319 484h2M392 484h2M465 484h2M537 484h2M601 484h2M668 484h2M748 484h2"/></g>
        <g stroke="#999"><path d="M282.500 111v3M359.500 111v3M427.500 111v3M499.500 111v3M572.500 111v3M645.500 111v3M718.500 111v3M207 174.500h3M207 236.500h3M207 358.500h3M207 420.500h3M789 174.500h3M789 236.500h3M789 420.500h3M282.500 481v3M359.500 481v3M427.500 481v3M718.500 481v3"/></g>
        <!-- dimensions -->
        <g stroke="#0a0a98">
          <path d="M263.500 282v-91h29v65M241.500 256.500h42M242.500 256v28M235.500 405V283h29M280 209l-8 31M257 207.500h18M299 283.500h18v18h-18M271.500 302v40h42M299.500 301v40M299 399.500h17v6h-80M300 417l6 7h10"/>
          <path d="M400.500 145v-24h102v79M477 189l8 8h9M424.500 236v-23h54v24M408 221.500h8M426 221.500h4M472 226.500h6M488 226.500h8M414.500 222v12M487.500 226v8M414 256.500h-38v95h157v52M425 279l25-14h6M498 290l16-30h6M496 294l26-20h6M490 299.500h65v104h-65M424 362.500h66M388 372l55-19M375.500 398v18M375 406.500h60M375 403.500h30M416.500 419v21h70v-21M365 416.500h10"/>
          <path d="M618.500 282v-77h29v52M663 241l20-21h8M656 254l40-16h8M660 280l13 13h6M605 353.500h49M618.500 418v28M618 419l-12 13h-6M644 418q-2 12-10 19t-15 9"/>
        </g>
        <g fill="#0c0cb4" stroke="none">
          <path d="M263 191l4-2v4zM293 191l-4-2v4zM400 121l4-2v4zM503 121l-4-2v4zM424 213l4-2v4zM479 213l-4-2v4zM416 440l4-2v4zM486 440l-4-2v4zM555 299l-2 4h4zM555 403l-2-4h4zM532 351l-2 4h4zM532 403l-2-4h4zM376 256l-2 4h4zM376 351l-2-4h4zM618 205l4-2v4zM648 205l-4-2v4zM654 353l-4-2v4zM618 353l4-2v4zM660 280l5 1-3 3zM236 283l-2 4h4zM242 256l-2 4h4zM299 342l-4-2v4zM503 200l-4-2v4z"/>
        </g>
        <g fill="#1414d2" stroke="none" font-size="5" text-anchor="middle">
          <text x="277" y="193">44.27</text><text x="268" y="209">11.5</text><text x="284" y="212">10°</text><text x="242" y="272">22.5</text><text x="316" y="294">18.5</text><text x="234" y="346">122.5</text><text x="313" y="344">10.0</text><text x="317" y="405">6.5</text><text x="313" y="426">R2.5</text><text x="289" y="443">SEZIONE A-A</text>
          <text x="450" y="123">102.5</text><text x="487" y="199">R15</text><text x="453" y="215">54.0</text><text x="399" y="223">11.5</text><text x="504" y="228">10.0</text><text x="463" y="267">R8.0</text><text x="526" y="261">Ø17.5</text><text x="534" y="276">Ø32.0</text><text x="376" y="305">95.0</text><text x="553" y="352">104.5</text><text x="531" y="379">52.3</text><text x="494" y="364">40.5</text><text x="376" y="374">Ø 20.0</text><text x="367" y="418">5.0</text><text x="450" y="442">70.0</text>
          <text x="633" y="207">30.5</text><text x="695" y="222">R22.5</text><text x="709" y="240">Ø18.0</text><text x="683" y="295">R5.0</text><text x="597" y="355">36.0</text><text x="594" y="434">R2.5</text><text x="636" y="439">R15</text>
        </g>
        <!-- left section -->
        <path d="M271 247l-5 26-2 10v135.500h35.500V279q5-2 7-7" /><path d="M271 247a22.500 22.500 0 1 1 35 26M265 273.500h39"/><circle cx="292" cy="256.500" r="9"/>
        <path d="M264.500 283.500h35v18h-28v38h-7zM264.500 360.500h7v39h28v7h-35z" fill="url(#hp)"/><path d="M264 341.500h7.500v59M264 351.500h7M264 408.500h35"/>
        <g stroke="#ccc"><path d="M233.500 445.500h6v6h-6zM236.500 445v-43M234 406l2.500-5 2.500 5M240 448.500h43M279 446l4 2.500-4 2.500M234 393l3 4 3-4M237 397v5M286.500 445l6 7M292.500 445l-6 7"/></g>
        <!-- top view -->
        <path d="M415 145.500h-14.500v20l15 15h73l14-15v-20H488M425 145.500h53M415.500 180v-50.500h9.500V180M477.500 180v-50.500h9.500V180M412.500 146v31M433.500 146v34M470.500 146v34M490.500 146v32M415 173.500h10M477 173.500h10"/><path d="M416 149l2 3-2 3M424 149l-2 3 2 3M418 152h5M478 149l2 3-2 3M486 149l-2 3 2 3M480 152h5" stroke="#ddd"/>
        <!-- front view -->
        <path d="M415.500 283v-49h9.500v43q1 6 6 6.500h41q5-.5 6-6.500v-43h9.500v49M415 247.500h10M415 252.500h10M415 265.500h10M415 277.500h10M477 247.500h10M477 252.500h10M477 265.500h10M477 277.500h10"/>
        <path d="M416 282.500a16.300 16.300 0 0 0 0 32.600q9 1 9.500 10v52q-1 9-9.500 10a16.300 16.300 0 1 0 16 19h39a16.300 16.300 0 1 0 15-19q-8-1-8.500-10v-52q1-9 8.500-10a16.300 16.300 0 0 0 0-32.600M433.500 301.500h36l5 9-3.500 8v67l3.500 7-5 8h-36l-5-8 3.500-7v-67l-3.500-8z"/>
        <circle cx="416" cy="299" r="9.500"/><circle cx="486" cy="299" r="9.500"/><circle cx="416" cy="403" r="9.500"/><circle cx="486" cy="403" r="9.500"/><circle cx="451" cy="351" r="9.500"/>
        <path d="M405 299.500h92M405 403.500h92M416.500 284v134M486.500 284v134M415 256.500h82" stroke-dasharray="9 2 2 2"/>
        <path d="M411 418h11M481 418h11" stroke="#fff" stroke-width="2"/>
        <path d="M451.500 226v202M452 226.500h-7M452 427.500h-7" stroke="#bbb" stroke-width="1.500"/><path d="M443 226l5-2v4zM443 427l5-2v4z" fill="#ddd" stroke="none"/>
        <g fill="#ccc" stroke="none" font-size="6"><text x="439" y="225">A</text><text x="439" y="426">A</text></g>
        <!-- right view -->
        <path d="M620 283l7-39a22.500 22.500 0 1 1 29 33l-1.500 2v139h-36V283M620 279.500h34M619 283.500h35M619 315.500h35M619 324.500h35M619 379.500h35M619 387.500h35M618.500 282.500a16.300 16.300 0 0 1 0 32.600M618.500 290a9 9 0 0 1 0 18M618.500 387a16.300 16.300 0 0 1 0 32M618.500 394a9 9 0 0 1 0 18"/><circle cx="647.500" cy="256.500" r="9"/>
        <!-- title block -->
        <g stroke="#c8c8c8"><path d="M683.500 435.500h106M683.500 441.500h106M683.500 446v-11M694.500 441v5M747.500 441v5M768.500 441v5M643.500 481v-34.500h146M661.500 447v30M678.500 447v34M702.500 447v34M733.500 447v34M643 451.500h60M643 456.500h60M643 460.500h60M643 465.500h60M643 470.500h35M643 474.500h35M643 478.500h35M703 456.500h30M703 461.500h30M703 467.500h30M717.500 447v20M725.500 447v20M733 468.500h56M733 477.500h56M740.500 469v8M781.500 469v12M617.500 481v-14h26M617 470.500h26M617 473.500h26M617 476.500h26M791 359.500h6v32h-6z"/><path d="M618 472h25M618 475h25M679 449h23M679 453h10M679 458h16" stroke-width="2"/></g>
        <g fill="#ddd" stroke="none" font-size="3"><text x="730" y="440">REVISIONI</text><text x="685" y="445">REV</text><text x="712" y="445">DESCRIZIONE</text><text x="753" y="445">DATA</text><text x="773" y="445">APPROV</text><text x="680" y="456">TOLLERANZE</text><text x="680" y="460">ANGOLI</text><text x="680" y="464">LINEARI</text><text x="704" y="451">DIS.</text><text x="704" y="455">VERIF.</text><text x="704" y="460">APPR.</text><text x="735" y="451">TITOLO</text><text x="649" y="478">MAT.</text><text x="665" y="478">FIN.</text><text x="735" y="473">A3</text><text x="736" y="481">SCALA</text><text x="756" y="481">PESO</text><text x="783" y="474">REV</text></g>
        <g fill="#ccc" stroke="none" text-anchor="middle" font-size="5"><text x="761" y="463">PLATE - BOTTOM</text><text x="761" y="475">Draw3</text></g>
        <g fill="#ddd" stroke="none"><path d="M792 361h4v4h-4zM792 370h3v8h-3zM792 384h4v5h-4z"/></g>
        <path d="M582 170l4 8 .5-3 3 5 1-1-3-4 2-1z" fill="#eee" stroke="none"/>
      </svg>
      </div>
      <div class="sheets d-flex"><button class="fw-bold">Modello</button><button>Foglio1</button><button class="bg-transparent ms-0">+</button></div>
    </section>

    <aside class="cam d-flex flex-column flex-shrink-0" aria-label="Lavorazione">
      <div class="cambox d-flex flex-fill">
        <div class="camcol d-flex flex-column flex-fill">
          <section class="csec"><button class="sechead">Commenti</button><textarea class="pick" style="height:17px;width:calc(100% - 16px);margin:3px 5px 0 11px;resize:none" aria-label="Commenti"></textarea></section>
          <section class="csec"><button class="sechead">Percorso e ciclo trapanatura</button><div class="cbody">
            <select class="pick w-100" aria-label="Percorso"><option>Percorso strumenti 2D</option></select>
            <div class="d-flex" style="gap:8px;margin:1px 0 0 2px"><button class="big" aria-label="Impostazioni"><svg class="ic"><use href="#gear"/></svg></button><button class="big" aria-label="Apri"><svg class="ic"><use href="#open"/></svg></button><button class="big" aria-label="Salva"><svg class="ic"><use href="#save"/></svg></button><button class="big fw-bold" style="font-size:8px">?</button><button class="big wide">Aggiungi</button></div>
          </div></section>
          <section class="csec"><button class="sechead">Preambolo</button><div class="cbody" style="padding-top:3px">
            <div class="note d-flex"><textarea class="pick" aria-label="Preambolo">M3&nbsp;&nbsp;&nbsp;&nbsp; ; Start spindle clockwise (looking from above down)
S6000&nbsp; ; Spindle RPM</textarea><div class="mini d-flex flex-column justify-content-between"><span class="arr"></span><span class="arr down"></span></div></div>
            <label class="opt" style="margin:4px 0 0 1px"><input type="checkbox">Mostra numeri linea</label>
          </div></section>
          <section class="csec"><button class="sechead">Postscript</button><div class="cbody" style="padding-top:3px">
            <div class="note d-flex"><textarea class="pick" aria-label="Postscript">G0 Z50;
Safe height G0 X0 Y0;
M30; Rewind program</textarea><div class="mini d-flex flex-column justify-content-between"><span class="arr"></span><span class="arr down"></span></div></div>
          </div></section>
          <section class="csec"><button class="sechead">Unità</button><div class="cbody" style="padding-top:3px">
            <div class="d-flex" style="gap:20px"><label class="opt"><input type="radio" name="u">mm</label><label class="opt"><input type="radio" name="u" checked>police</label></div>
            <select class="pick w-100" style="margin-top:2px" aria-label="Modo"><option>Relativo</option></select>
          </div></section>
          <section class="csec"><button class="sechead">Retrazione e feed rate</button><div class="feeds">
            <label><svg class="ic"><use href="#sa"/></svg><input class="pick" placeholder="Altezza di sicurezza Z"></label>
            <label><svg class="ic"><use href="#rz"/></svg><input class="pick" placeholder="Retrazione Z"></label>
            <label><svg class="ic"><use href="#fz"/></svg><input class="pick" placeholder="Feed rate Z"></label>
            <label><svg class="ic"><use href="#fxy"/></svg><input class="pick" placeholder="Feed rate XY"></label>
            <label><svg class="ic"><use href="#pt"/></svg><input class="pick" placeholder="Profondità taglio"></label>
          </div></section>
          <button class="sechead flex-shrink-0">Visualizza finestra</button>
          <div class="view flex-fill d-flex align-items-end justify-content-center"><svg width="16" height="12" viewBox="0 0 16 12"><path d="M2 2l3 5 1 5" fill="none" stroke="#ddd"/><path d="M1 1h2M4 6h2" stroke="#fff"/></svg></div>
        </div>
        <div class="scroller d-flex flex-column flex-shrink-0"><span class="arr"></span><span class="thumb"></span><span class="arr down mt-auto"></span></div>
      </div>
    </aside>
  </main>
  <footer>
    <div class="cmdhead d-flex justify-content-between align-items-center"><span>Finestra comando</span><svg class="ic" style="width:6px;height:6px"><use href="#restore"/></svg></div>
    <div class="cmdbody"><div>Tavolozza "3D CONTENTCENTRAL" chiusa</div><div>Tavolozza "HomeByMe" chiusa</div></div>
  </footer>
</div>
</div>
<script>
// Fill each toolbar from its list of icon names; "|" is a separator.
document.querySelectorAll('[data-tools]').forEach(bar=>{
  bar.innerHTML=bar.dataset.tools.split(' ').map(n=>n==='|'?'<span class="rule"></span>'
    :`<button class="tool ${n==='dd'?'dd':''}" aria-label="${n}"><svg class="ic"><use href="#${n}"/></svg></button>`).join('');
});
</script>
<script src="https://cdn.jsdelivr.net/npm/bootstrap@5.3.0/dist/js/bootstrap.bundle.min.js"></script>
</body>
</html>
